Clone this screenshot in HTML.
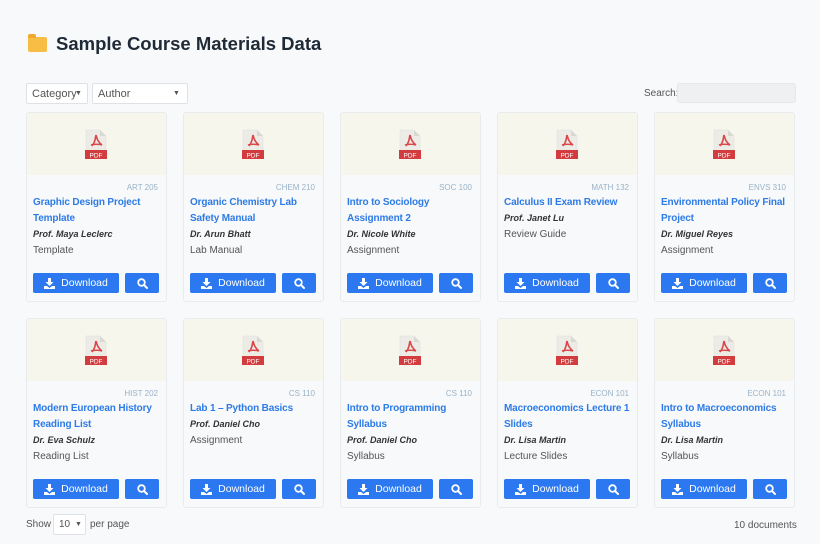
<!DOCTYPE html>
<html><head><meta charset="utf-8"><style>
*{box-sizing:border-box;margin:0;padding:0}
body{width:820px;height:544px;background:#f8f9fb;font-family:"Liberation Sans",sans-serif;position:relative;overflow:hidden;color:#212529}
h1{position:absolute;left:28px;top:33px;font-size:18.5px;font-weight:bold;color:#1f2a37;display:flex;align-items:center}
.fold{width:19px;height:15px;background:#f7bd45;border-radius:2px;margin-right:9px;position:relative}
.fold:before{content:"";position:absolute;left:0;top:-3px;width:8px;height:4px;background:#f0a92e;border-radius:2px 2px 0 0}
.sel{position:absolute;top:83px;height:21px;border:1px solid #dee2e6;background:#fff;border-radius:2px;font-size:11px;color:#555;padding:4px 5px}
.sel i{font-style:normal;font-size:7px;position:absolute;top:6px}
.srch{position:absolute;left:644px;top:88px;font-size:10px;color:#555}
.sbox{position:absolute;left:677px;top:83px;width:119px;height:20px;background:#eff0f1;border:1px solid #e6e7e9;border-radius:3px}
.card{position:absolute;width:141px;height:190px;background:#f8f9fa;border:1px solid #e9ecef;border-radius:3px;overflow:hidden}
.img{height:62px;background:#f7f6ec;position:relative}
.pdf{position:absolute;left:58px;top:16px;width:22px;height:30px}
.code{position:absolute;right:8px;top:70px;font-size:8px;color:#9ab3c9}
.t{position:absolute;left:6px;top:82px;width:134px;font-size:10px;letter-spacing:-0.15px;font-weight:bold;color:#2d7be6;line-height:16px}
.a{position:absolute;left:6px;font-size:9px;font-weight:bold;font-style:italic;color:#333}
.ty{position:absolute;left:6px;font-size:10px;color:#555}
.dl{position:absolute;left:6px;top:160px;width:86px;height:20px;background:#2b78f0;border-radius:2px;color:#fff;font-size:10.5px;display:flex;align-items:center;justify-content:center;gap:6px}
.sq{position:absolute;left:98px;top:160px;width:34px;height:20px;background:#2b78f0;border-radius:2px;display:flex;align-items:center;justify-content:center}
.foot{position:absolute;font-size:10px;color:#555}
</style></head><body>
<h1><span class="fold"></span>Sample Course Materials Data</h1>
<div class="sel" style="left:26px;width:62px">Category<i style="left:48px">▼</i></div>
<div class="sel" style="left:92px;width:96px">Author<i style="left:80px">▼</i></div>
<div class="srch">Search:</div><div class="sbox"></div>
<div id="c"></div>
<div class="foot" style="left:26px;top:519px">Show</div>
<div class="sel" style="left:53px;top:514px;width:33px;height:21px;font-size:10px">10<i style="left:21px">▼</i></div>
<div class="foot" style="left:90px;top:519px">per page</div>
<div class="foot" style="left:734px;top:520px">10 documents</div>
<script>
const d=[["ART 205","Graphic Design Project Template","Prof. Maya Leclerc","Template",1],
["CHEM 210","Organic Chemistry Lab Safety Manual","Dr. Arun Bhatt","Lab Manual",1],
["SOC 100","Intro to Sociology Assignment 2","Dr. Nicole White","Assignment",1],
["MATH 132","Calculus II Exam Review","Prof. Janet Lu","Review Guide",0],
["ENVS 310","Environmental Policy Final Project","Dr. Miguel Reyes","Assignment",1],
["HIST 202","Modern European History Reading List","Dr. Eva Schulz","Reading List",1],
["CS 110","Lab 1 – Python Basics","Prof. Daniel Cho","Assignment",0],
["CS 110","Intro to Programming Syllabus","Prof. Daniel Cho","Syllabus",1],
["ECON 101","Macroeconomics Lecture 1 Slides","Dr. Lisa Martin","Lecture Slides",1],
["ECON 101","Intro to Macroeconomics Syllabus","Dr. Lisa Martin","Syllabus",1]];
const xs=[26,183,340,497,654];let h="";
d.forEach((c,i)=>{const x=xs[i%5],y=i<5?112:318;const two=c[4];
const ay=two?116:100,ty=two?132:116;
h+=`<div class="card" style="left:${x}px;top:${y}px"><div class="img"><svg class="pdf" viewBox="0 0 22 30"><path d="M1 1h14l6 6v22H1z" fill="#ecebe6" stroke="#ddd" stroke-width=".5"/><path d="M15 1v6h6" fill="#d9d8d2"/><path d="M11 6c-1 3 0 6 -4 11M11 6c1 4 2 7 6 10M6 16c3-1 8-1 11 0" stroke="#d9474a" stroke-width="1.6" fill="none"/><rect x="0" y="21" width="22" height="9" fill="#d23c3f"/><text x="11" y="28.3" font-size="6.5" fill="#fff" text-anchor="middle" font-family="Liberation Sans">PDF</text></svg></div>
<div class="code">${c[0]}</div><div class="t">${c[1]}</div><div class="a" style="top:${ay}px">${c[2]}</div><div class="ty" style="top:${ty}px">${c[3]}</div>
<div class="dl"><svg width="11" height="11" viewBox="0 0 11 11"><path d="M4 0h3v4h2.5L5.5 8 1.5 4H4z M0 8h3l2.5 2 2.5-2h3v3H0z" fill="#fff"/></svg>Download</div>
<div class="sq"><svg width="11" height="11" viewBox="0 0 11 11"><circle cx="4.5" cy="4.5" r="3.3" stroke="#fff" stroke-width="1.8" fill="none"/><path d="M7 7l3 3" stroke="#fff" stroke-width="2" stroke-linecap="round"/></svg></div></div>`});
document.getElementById("c").innerHTML=h;
</script>
</body></html>
